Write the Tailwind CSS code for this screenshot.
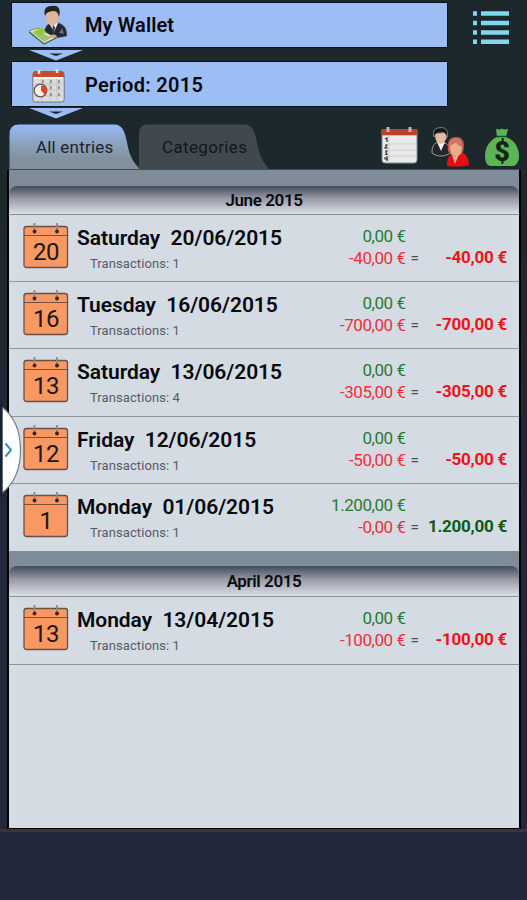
<!DOCTYPE html>
<html lang="en">
<head>
  <meta charset="UTF-8">
  <title>My Wallet</title>
  <script src="https://cdn.jsdelivr.net/npm/@tailwindcss/browser@4"></script>
</head>
<body class="w-[527px] h-[900px] overflow-hidden relative bg-linear-to-b from-[#1d282c] from-20% to-[#20283a] to-60% font-[Roboto,sans-serif] text-[#07090d]">

  <!-- icons used more than once -->
  <svg class="hidden">
    <symbol id="day" viewBox="0 0 46 46">
      <rect x="1" y="3.5" width="43.5" height="41" rx="2.5" fill="#f99862" stroke="#675046" stroke-width="1.3"/>
      <path d="M1 12.5h43.5" stroke="#74513e" stroke-width="1"/>
      <path d="M11.5 0v7M34 0v7" stroke="#8d8986" stroke-width="1.8"/>
      <circle cx="11.5" cy="8.5" r="1.9" fill="#3d2112"/>
      <circle cx="34" cy="8.5" r="1.9" fill="#3d2112"/>
    </symbol>
    <symbol id="arrow" viewBox="0 0 54 11">
      <path d="M0 0h54L27 10.5z" fill="#9dbdf5"/>
      <path d="M20 3.4h14l-7 2.6z" fill="#17222b"/>
    </symbol>
  </svg>

  <header class="flex pt-[3px] pl-3 h-[124px]">
    <div class="w-[435px]">
      <div class="h-[44px] bg-[#9dbdf5] outline-1 outline-[#0a1018] flex items-center">
        <svg class="ml-4 w-[41px] h-[40px]" viewBox="0 0 41 40">
          <path d="M16 31c0-9 3-12 8-14l7 1c5 2 8 5 8 13-7 2-16 3-23 0z" fill="#24272f" stroke="#7d8795" stroke-width=".6"/>
          <path d="M21 18l5 9 4-9z" fill="#f4f2ee"/>
          <path d="M25 20l-1 7 2 2 1-7z" fill="#343b4a"/>
          <path d="M18 9c0 7 2 11 6 12 5-1 7-6 7-12 0-8-13-8-13 0z" fill="#e0b696"/>
          <path d="M17 11c-2-8 2-10 7-10 7-1 9 4 7 11-1-4-2-6-6-6-3 1-6 0-8 5z" fill="#272425"/>
          <path d="M1 26l9-3 18 10-12 6z" fill="#dfe6cf" stroke="#68843d" stroke-width=".8"/>
          <path d="M4 27l6-2 13 8-7 4z" fill="#a6bf78"/>
          <path d="M6 26l8-3 4 4-7 3z" fill="#8bd226"/>
          <path d="M1 27l15 12 12-6" fill="none" stroke="#466b42" stroke-width="1.2"/>
          <path d="M20 32c3-3 6-3 8-2l1 2-6 1z" fill="#d7aa86"/>
          <path d="M31 28l3-5 2 6z" fill="#6a7078"/>
        </svg>
        <span class="ml-4 text-[20px] font-semibold tracking-[.1px]">My Wallet</span>
      </div>
      <svg class="mt-[3px] ml-[17px] w-[54px] h-[11px]"><use href="#arrow"/></svg>
      <div class="mt-px h-[44px] bg-[#9dbdf5] outline-1 outline-[#0a1018] flex items-center">
        <svg class="ml-5 mt-1 w-[33px] h-[34px]" viewBox="0 0 33 34">
          <rect x=".8" y="3" width="31.4" height="30" rx="2.5" fill="#dcdcda" stroke="#73777d"/>
          <path d="M1 8V5q0-3 3-3h25q3 0 3 3v3z" fill="#c64b31"/>
          <path d="M2 9h29" stroke="#fff" stroke-width="1.4"/>
          <path d="M7 1v4M25 0v4" stroke="#e4e4e4" stroke-width="2.5"/>
          <path d="M3 15h27M3 21h27M3 27h27M10 10v21M18 10v21M25 10v21" stroke="#c1c1bf"/>
          <path d="M11 11v3M19 11v3M27 11v3M19 17v3M27 17v3M19 24v3M27 24v3" stroke="#777" stroke-width="1.3"/>
          <circle cx="8.500" cy="21.500" r="6.300" fill="#f2f1ed" stroke="#57575a" stroke-width="1.2"/>
          <path d="M9 21.500V16.500a5.500 5.500 0 0 1 4 9.500z" fill="#ee3b22"/>
        </svg>
        <span class="ml-5 pt-px text-[20px] font-semibold tracking-[.3px]">Period: 2015</span>
      </div>
      <svg class="mt-[2px] ml-[17px] w-[54px] h-[11px]"><use href="#arrow"/></svg>
    </div>
    <svg class="ml-[25px] mt-[7px] w-[38px] h-[36px]" viewBox="0 0 38 36" stroke="#80d8ee" stroke-width="4.600">
      <path d="M1 3.500h4M9 3.500h28M1 13h4M9 13h28M1 22.500h4M9 22.500h28M1 31.800h4M9 31.800h28"/>
    </svg>
  </header>

  <nav class="flex h-[45px] pl-[9px]">
    <div class="relative w-[130px] h-[45px]">
      <svg class="absolute inset-0 w-[132px] h-[45px]" viewBox="0 0 132 45">
        <defs>
          <linearGradient id="tab" x2="0" y2="1">
            <stop offset="0" stop-color="#96bbfb"/>
            <stop offset=".35" stop-color="#8ea6c8"/>
            <stop offset=".75" stop-color="#82929f"/>
            <stop offset="1" stop-color="#7f8f9b"/>
          </linearGradient>
        </defs>
        <path d="M.5 45V10Q.5 .5 10 .5h95c9 0 11 8 13 18 2 12 6 20 13 26.500z" fill="url(#tab)"/>
      </svg>
      <span class="relative block pl-[27px] pt-[11px] text-[17px] leading-[24px] tracking-[.2px] text-[#1c232d]">All entries</span>
    </div>
    <div class="relative w-[130px] h-[45px]">
      <svg class="absolute inset-0 w-[132px] h-[45px]" viewBox="0 0 132 45">
        <path d="M0 45V10Q0 .5 9 .5h96c9 0 11 8 13 18 2 12 6 20 12 26.500z" fill="#42494e"/>
      </svg>
      <span class="relative block pl-[23px] pt-[11px] text-[17px] leading-[24px] tracking-[.35px] text-[#11171b]">Categories</span>
    </div>
    <div class="flex ml-[112px] pt-[3px]">
      <svg class="w-[37px] h-[38px]" viewBox="0 0 37 38">
        <path d="M1 8h35v25q0 3-3 3H4q-3 0-3-3z" fill="#e9e9e8" stroke="#8c8c8c"/>
        <path d="M0 8V4q0-2 2-2h33q2 0 2 2v4z" fill="#b54429"/>
        <path d="M7 0v5M29 0v5" stroke="#b9b9b9" stroke-width="3"/>
        <path d="M8 9v26M8 17h28M8 23h28M8 29h28" stroke="#cfcfcf"/>
        <path d="M4 12l2-1v4M4 18h2l-2 3h3M4 24h2l-1 1.500 1 2H4M4 30v2h3M6 29v5" fill="none" stroke="#333" stroke-width="1.2"/>
      </svg>
      <svg class="ml-[13px] w-[39px] h-[40px]" viewBox="0 0 39 40">
        <path d="M1 26c0-6 1-9 6-11l7 1c4 2 5 5 5 10-5 4-13 4-18 0z" fill="#24262b" stroke="#979b9e" stroke-width="1"/>
        <path d="M6 15l4 9 4-9z" fill="#f1f1ef"/>
        <path d="M4 6c0 6 1 10 6 11 4-2 6-5 6-10 0-6-12-6-12-1z" fill="#e6b999"/>
        <path d="M3 10C1 3 5 .7 9 .7c6-1 9 4 7 10-1-4-2-5-5-5-3 1-6-1-8 4.300z" fill="#171719" stroke="#909598" stroke-width=".8"/>
        <path d="M16 39c0-7 1-10 6-13l9-1c5 3 7 7 7 13-6 2-16 2-22 1z" fill="#df1117"/>
        <path d="M17 24c-1-9 1-14 8-14 8 0 9 7 7 15-2 5-11 7-15-1z" fill="#bd5a51"/>
        <path d="M19 19c0 7 2 10 6 11 4-1 6-5 6-11 0-5-11-5-12 0z" fill="#e8ae88"/>
        <path d="M18 20c2-3 5-2 7-5 1 3 4 4 6 5 1-6-2-9-6-9s-8 3-7 9z" fill="#cf7569"/>
        <path d="M21 28l3 9 4-10-4 3z" fill="#efb391"/>
      </svg>
      <svg class="ml-[15px] w-[34px] h-[40px]" viewBox="0 0 34 40">
        <path d="M12 10L11 2l4 .5 2-1 2 1L23 2l-2 8c8 3 13 10 13 19 0 6-3 10-6 10H6c-4 0-6-4-6-10 0-9 5-16 12-19z" fill="#5cb555"/>
        <path d="M11.500 9.500h10" stroke="#244b29" stroke-width="1.500"/>
        <text x="17" y="34" text-anchor="middle" font-family="Roboto" font-size="27" font-weight="900" fill="#14231a">$</text>
      </svg>
    </div>
  </nav>

  <main id="entries" class="ml-[7px] w-[514px] h-[660px] bg-[#d5dbe3] border-l-2 border-r-2 border-b border-black border-t border-t-[#414b55]"></main>

  <footer class="h-[71px] bg-[#21283a] border-t-[3px] border-[#38363a]"></footer>

  <!-- drawer handle -->
  <svg class="absolute left-0 top-[404px] w-[24px] h-[92px]" viewBox="0 0 24 92">
    <path d="M2 3C15 13 20.500 28 20.500 46S15 79 2 89z" fill="#fcfdfe" stroke="#7b8188" stroke-width="1.200"/>
    <path d="M0 0h2.500v92H0z" fill="#182331"/>
    <path d="M5.500 39.500l5.500 6.500-5.500 6.500" fill="none" stroke="#3c8daf" stroke-width="2"/>
  </svg>

  <script>
    const months = [
      { name: "June 2015", header: "h-[29px] leading-[28px]", list: "", days: [
        ["20", "Saturday", "20/06/2015", 1, "0,00", "-40,00", "-40,00"],
        ["16", "Tuesday", "16/06/2015", 1, "0,00", "-700,00", "-700,00"],
        ["13", "Saturday", "13/06/2015", 4, "0,00", "-305,00", "-305,00"],
        ["12", "Friday", "12/06/2015", 1, "0,00", "-50,00", "-50,00"],
        ["1", "Monday", "01/06/2015", 1, "1.200,00", "-0,00", "1.200,00"],
      ]},
      { name: "April 2015", header: "h-[31px] leading-[31px]", list: "border-b border-[#8b949e]", days: [
        ["13", "Monday", "13/04/2015", 1, "0,00", "-100,00", "-100,00"],
      ]},
    ];

    function row([num, day, date, count, income, expense, total]) {
      const color = total.startsWith("-") ? "text-[#f31218]" : "text-[#0c5a16]";
      return `
        <div class="flex h-[67.4px] border-b border-[#8f98a2] last:border-b-0 last:h-[66.5px]">
          <div class="relative ml-[14px] mt-[8px] w-[46px] h-[46px]">
            <svg class="absolute inset-0 w-[46px] h-[46px]"><use href="#day"/></svg>
            <span class="relative block pt-[15px] text-center text-[24px] leading-[28px] tracking-[-.5px] text-[#20160f]">${num}</span>
          </div>
          <div class="ml-[8px] pt-[10px] w-[230px]">
            <p class="text-[21px] leading-[26px] font-semibold tracking-[-.05px] whitespace-pre">${day}  ${date}</p>
            <p class="pl-[13px] pt-[4px] text-[13px] leading-[18px] tracking-[.08px] text-[#555c66]">Transactions: ${count}</p>
          </div>
          <div class="w-[98.500px] pt-[10px] text-right text-[17px] leading-[22px] tracking-[-.45px]">
            <p class="text-[#277a31]">${income} €</p>
            <p class="text-[#ed3039]">${expense} €</p>
          </div>
          <p class="w-[18.500px] pt-[33px] text-center text-[15px] leading-[21px] font-medium text-[#4b5158]">=</p>
          <p class="w-[83px] pt-[32px] text-right text-[17px] leading-[21px] font-bold tracking-[-.25px] ${color}">${total} €</p>
        </div>`;
    }

    document.getElementById("entries").innerHTML = months.map(m => `
      <section>
        <div class="bg-[#7f8d99] pt-[15.500px]">
          <h2 class="${m.header} rounded-t-lg bg-linear-to-b from-[#424c5b] via-[#989ba8] via-45% to-[#dcdee6] border-b border-[#8a929c] text-center text-[17px] font-semibold tracking-[-.4px]">${m.name}</h2>
        </div>
        <div class="${m.list}">${m.days.map(row).join("")}</div>
      </section>`).join("");
  </script>
</body>
</html>
